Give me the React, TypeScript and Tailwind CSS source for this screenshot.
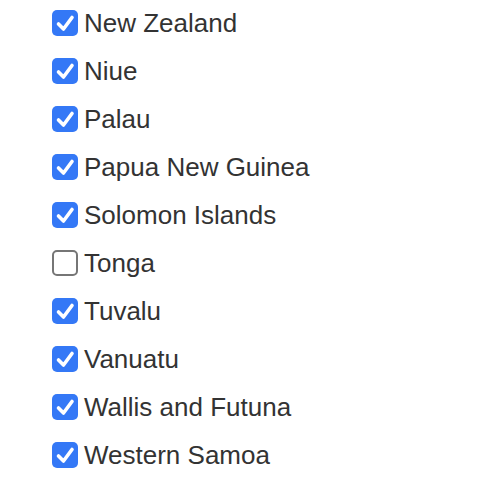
import React from "react";

const items: [string, boolean][] = [
  ["New Zealand", true],
  ["Niue", true],
  ["Palau", true],
  ["Papua New Guinea", true],
  ["Solomon Islands", true],
  ["Tonga", false],
  ["Tuvalu", true],
  ["Vanuatu", true],
  ["Wallis and Futuna", true],
  ["Western Samoa", true],
];

function Box({ checked }: { checked: boolean }) {
  if (checked) {
    return (
      <span className="flex h-[26px] w-[26px] shrink-0 items-center justify-center rounded-[5px] bg-[#3478f6]">
        <svg width="26" height="26" viewBox="0 0 26 26" fill="none">
          <path d="M6.5 14 L11.5 19 L20 7.5" stroke="white" strokeWidth="3.6" strokeLinecap="round" strokeLinejoin="round" />
        </svg>
      </span>
    );
  }
  return <span className="h-[26px] w-[26px] shrink-0 rounded-[5px] border-2 border-[#767676] bg-white" />;
}

export default function App() {
  return (
    <div className="h-[498px] w-[482px] overflow-hidden bg-white pl-[52px]" style={{ fontFamily: '"Liberation Sans", Arial, sans-serif' }}>
      <div className="-mt-px">
        {items.map(([name, checked]) => (
          <label key={name} className="flex h-12 items-center gap-[6px] text-[26px] text-[#333333]">
            <Box checked={checked} />
            <span className="leading-none">{name}</span>
          </label>
        ))}
      </div>
    </div>
  );
}
